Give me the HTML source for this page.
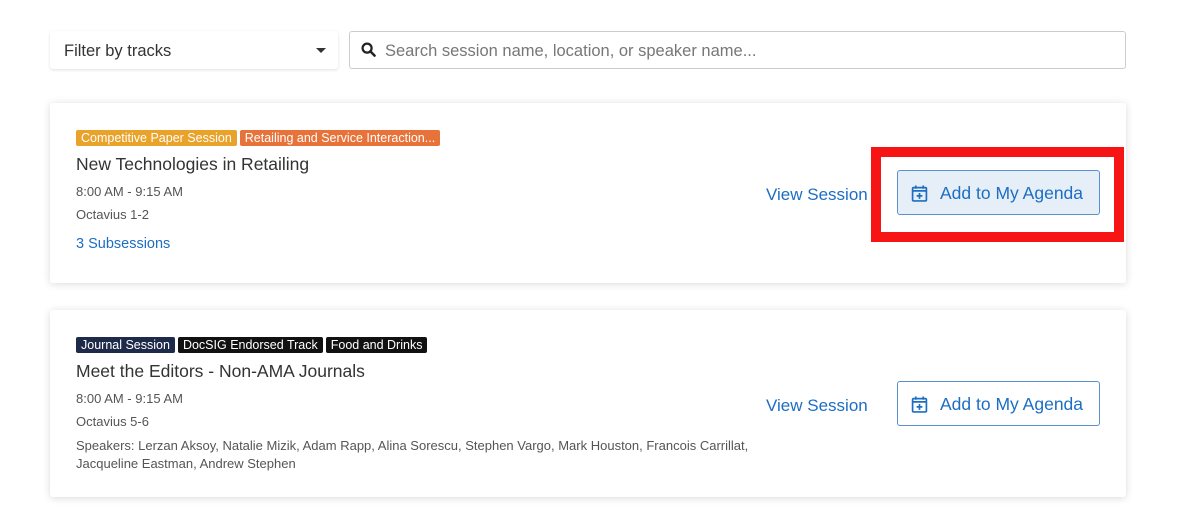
<!DOCTYPE html>
<html><head><style>
body{margin:0;width:1199px;height:531px;background:#fff;font-family:"Liberation Sans",sans-serif;position:relative;overflow:hidden}
.abs{position:absolute}
.filter{left:50px;top:31px;width:288px;height:38px;box-shadow:0 1px 3px rgba(0,0,0,.12);border-radius:3px;background:#fff}
.filter span{position:absolute;left:14px;top:11px;font-size:16.5px;color:#333}
.filter i{position:absolute;right:12px;top:17px;border-left:5px solid transparent;border-right:5px solid transparent;border-top:5px solid #333}
.search{left:349px;top:31px;width:775px;height:36px;border:1px solid #ccc;border-radius:3px}
.search span{position:absolute;left:35px;top:10px;font-size:16.5px;color:#777}
.card{left:50px;width:1076px;background:#fff;box-shadow:0 1px 8px rgba(0,0,0,.15);border-radius:3px}
.tag{display:inline-block;font-size:12.5px;color:#fff;padding:1px 5px;border-radius:2px;margin-right:3px;line-height:14px}
.title{font-size:17.5px;color:#333;margin-top:7px}
.sm{font-size:13px;color:#555}
.link{color:#1d6ec3}
.btn{width:203px;height:45px;border:1px solid #5b90cf;border-radius:3px;color:#1d6ec3;font-size:17.5px;box-sizing:border-box}
.btn span{position:absolute;left:42px;top:12px}
.btn svg{position:absolute;left:13px;top:14px}
</style></head><body>
<div class="abs filter"><span>Filter by tracks</span><i></i></div>
<div class="abs search"><svg class="abs" style="left:11px;top:10px" width="15" height="15" viewBox="0 0 16 16"><circle cx="6.5" cy="6.5" r="4.8" fill="none" stroke="#222" stroke-width="2.4"/><path d="M10 10l4.5 4.5" stroke="#222" stroke-width="2.6" stroke-linecap="round"/></svg><span>Search session name, location, or speaker name...</span></div>

<div class="abs card" style="top:103px;height:180px">
 <div class="abs" style="left:26px;top:26px;width:700px">
  <span class="tag" style="background:#e9a22a">Competitive Paper Session</span><span class="tag" style="background:#e8733a">Retailing and Service Interaction...</span>
  <div class="title">New Technologies in Retailing</div>
  <div class="sm" style="margin-top:9px">8:00 AM - 9:15 AM</div>
  <div class="sm" style="margin-top:8px">Octavius 1-2</div>
  <div class="link" style="font-size:14.5px;margin-top:14px">3 Subsessions</div>
 </div>
 <div class="abs link" style="left:716px;top:82px;font-size:17px">View Session</div>
</div>
<div class="abs" style="left:871px;top:147px;width:233px;height:75px;border:10px solid #f61414"></div>
<div class="abs btn" style="left:897px;top:170px;background:#e6eff8"><svg width="17" height="17" viewBox="0 0 16 16"><rect x="1.5" y="2.5" width="13" height="12.5" rx="1" fill="none" stroke="#1d6ec3" stroke-width="1.6"/><path d="M1.5 5.5h13M4.5 0.5v3M11.5 0.5v3M8 7.5v5.5M5.3 10.2h5.4" stroke="#1d6ec3" stroke-width="1.6"/></svg><span>Add to My Agenda</span></div>

<div class="abs card" style="top:310px;height:187px">
 <div class="abs" style="left:26px;top:26px;width:700px">
  <span class="tag" style="background:#1e2a4a">Journal Session</span><span class="tag" style="background:#111">DocSIG Endorsed Track</span><span class="tag" style="background:#111">Food and Drinks</span>
  <div class="title">Meet the Editors - Non-AMA Journals</div>
  <div class="sm" style="margin-top:9px">8:00 AM - 9:15 AM</div>
  <div class="sm" style="margin-top:8px">Octavius 5-6</div>
  <div class="sm" style="margin-top:8px;line-height:18px">Speakers: Lerzan Aksoy, Natalie Mizik, Adam Rapp, Alina Sorescu, Stephen Vargo, Mark Houston, Francois Carrillat,<br>Jacqueline Eastman, Andrew Stephen</div>
 </div>
 <div class="abs link" style="left:716px;top:86px;font-size:17px">View Session</div>
</div>
<div class="abs btn" style="left:897px;top:381px;background:#fff"><svg width="17" height="17" viewBox="0 0 16 16"><rect x="1.5" y="2.5" width="13" height="12.5" rx="1" fill="none" stroke="#1d6ec3" stroke-width="1.6"/><path d="M1.5 5.5h13M4.5 0.5v3M11.5 0.5v3M8 7.5v5.5M5.3 10.2h5.4" stroke="#1d6ec3" stroke-width="1.6"/></svg><span>Add to My Agenda</span></div>
</body></html>
